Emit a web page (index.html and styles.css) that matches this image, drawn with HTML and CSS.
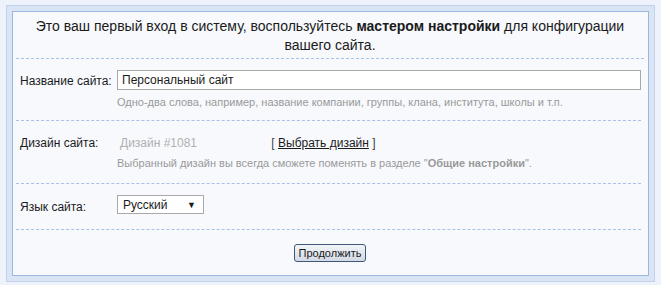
FILE: index.html
```html
<!DOCTYPE html>
<html lang="ru">

<head>
  <meta charset="UTF-8">
  <meta name="viewport" content="width=device-width, initial-scale=1.0">
  <title>Мастер настройки</title>
  <link rel="stylesheet" href="styles.css">
</head>

<body>
  <div class="outerBox">
    <div class="innerBox">
      <div class="introText">
        Это ваш первый вход в систему, воспользуйтесь <b>мастером настройки</b> для конфигурации<br>вашего сайта.
      </div>
      <div class="formRow rowName">
        <div class="rowLabel">Название сайта:</div>
        <div class="rowField">
          <input class="siteName" type="text" value="Персональный сайт">
          <div class="hint">Одно-два слова, например, название компании, группы, клана, института, школы и т.п.</div>
        </div>
      </div>
      <div class="formRow rowDesign">
        <div class="rowLabel labelDesign">Дизайн сайта:</div>
        <div class="rowField">
          <div class="designLine">
            <span class="designName">Дизайн #1081</span>
            <span class="designPick">[ <a href="#">Выбрать дизайн</a> ]</span>
          </div>
          <div class="hint hintDesign">Выбранный дизайн вы всегда сможете поменять в разделе "<b>Общие настройки</b>".</div>
        </div>
      </div>
      <div class="formRow rowLang">
        <div class="rowLabel labelLang">Язык сайта:</div>
        <div class="rowField">
          <div class="langSelect">Русский <span class="arrow">&#9660;</span></div>
        </div>
      </div>
      <div class="buttonRow">
        <button class="nextButton">Продолжить</button>
      </div>
    </div>
  </div>
</body>

</html>
```

FILE: styles.css
```css
body {
  margin: 0;
  padding: 5px 6px;
  background-color: #eef2fa;
  font-family: "Liberation Sans", Arial, sans-serif;
  font-size: 12px;
  color: #1b1b1b;
}

.outerBox {
  width: 637px;
  border: 1px solid #c3d2ea;
  background-color: #d9e4f4;
  padding: 5px;
}

.innerBox {
  border: 1px solid #9db6df;
  background-color: #f7f9fd;
  padding: 0 4px 13px 3px;
}

.introText {
  text-align: center;
  font-size: 14px;
  line-height: 19px;
  padding: 5px 0 3px;
  border-bottom: 1px dashed #a9c0e8;
}

.formRow {
  display: flex;
  padding: 12px 0 14px 4px;
  margin-right: 3px;
  border-bottom: 1px dashed #a9c0e8;
}

.rowName {
  padding-top: 11px;
  padding-bottom: 12px;
}

.rowDesign {
  padding-bottom: 14px;
}

.rowLang {
  padding-top: 11px;
  padding-bottom: 15px;
}

.rowLabel {
  width: 97px;
  padding-top: 4px;
}

.labelDesign {
  padding-top: 3px;
}

.labelLang {
  padding-top: 5px;
}

.rowField {
  flex: 1;
}

.siteName {
  display: block;
  box-sizing: border-box;
  width: 100%;
  height: 20px;
  margin: 0;
  padding: 1px 4px;
  border: 1px solid #a9a9a9;
  background-color: white;
  font-family: inherit;
  font-size: 12px;
  color: #1b1b1b;
}

.hint {
  margin-top: 6px;
  font-size: 11px;
  color: #999999;
}

.hintDesign {
  margin-top: 7px;
}

.designLine {
  padding: 3px 0 0 3px;
}

.designName {
  display: inline-block;
  width: 148px;
  color: #b0b0b0;
}

.designPick {
  color: #444;
}

.designPick a {
  color: #1b1b1b;
}

.langSelect {
  display: inline-block;
  box-sizing: border-box;
  width: 87px;
  height: 19px;
  padding: 2px 5px;
  border: 1px solid #a9a9a9;
  background-color: white;
}

.arrow {
  float: right;
  font-size: 9px;
  padding: 2px 2px 0 0;
}

.buttonRow {
  text-align: center;
  padding-top: 14px;
}

.nextButton {
  height: 18px;
  padding: 0 4px;
  border: 1px solid #3f5778;
  border-radius: 3px;
  background: linear-gradient(#f2f4f7, #d3dae4);
  font-family: inherit;
  font-size: 11px;
  color: #1b1b1b;
}
```
